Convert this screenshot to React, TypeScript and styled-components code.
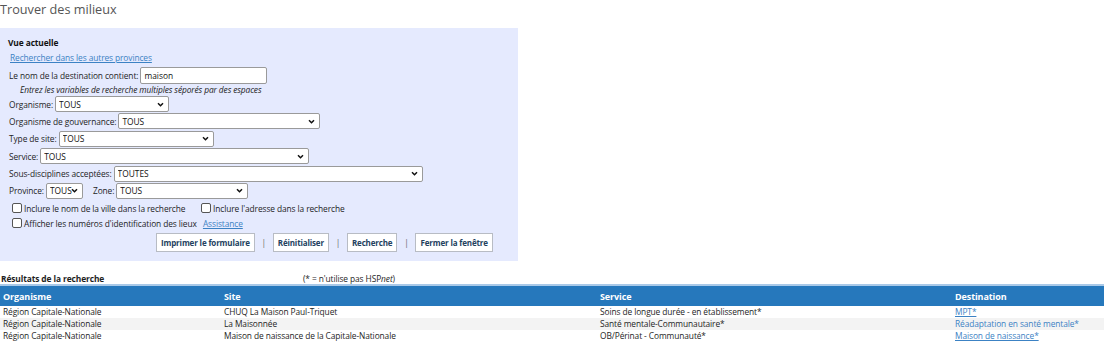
import React from 'react';
import styled, { createGlobalStyle } from 'styled-components';

const GlobalStyle = createGlobalStyle`
  body {
    margin: 0;
    background: #fff;
    font-family: 'Open Sans', 'Liberation Sans', sans-serif;
    font-size: 8.4px;
    letter-spacing: -0.1px;
    color: #1e1e1e;
  }
`;

const Page = styled.div`
  width: 1104px;
  height: 350px;
  overflow: hidden;
`;

const Title = styled.h1`
  margin: 0;
  padding: 1px 0 0 0;
  height: 27px;
  font-family: 'Open Sans', sans-serif;
  font-weight: 400;
  font-size: 12.7px;
  letter-spacing: 0;
  line-height: 17px;
  color: #555;
`;

const Panel = styled.div`
  width: 518px;
  box-sizing: border-box;
  background: #e5eafe;
  padding: 9px 8px 8px 8px;
  height: 233px;
`;

const PanelHeading = styled.div`
  font-weight: 700;
  line-height: 12px;
  color: #111;
`;

const Link = styled.a`
  color: #3c82c4;
  text-decoration: underline;
  cursor: pointer;
`;

const TopLink = styled(Link)`
  display: block;
  margin: 3px 0 0 2px;
  line-height: 12px;
`;

const Row = styled.div<{ $mt?: number }>`
  display: flex;
  align-items: center;
  gap: 2px;
  margin-top: ${(p) => p.$mt ?? 1.4}px;
  margin-left: 1px;
  height: 16px;
`;

const Label = styled.span<{ $ml?: number }>`
  white-space: nowrap;
  margin-left: ${(p) => p.$ml ?? 0}px;
`;

const TextInput = styled.input`
  width: 127px;
  height: 17px;
  box-sizing: border-box;
  border: 1px solid #9a9a9a;
  border-radius: 2px;
  padding: 0 3px;
  font: inherit;
  color: #111;
  background: #fff;
`;

const Hint = styled.div`
  font-style: italic;
  margin: 1px 0 0 12px;
  line-height: 11px;
  color: #222;
`;

const chevron =
  "url(\"data:image/svg+xml;utf8,<svg xmlns='http://www.w3.org/2000/svg' width='8' height='6' viewBox='0 0 8 6'><path d='M1 1.5 L4 4.5 L7 1.5' fill='none' stroke='%23111' stroke-width='1.8'/></svg>\")";

const Select = styled.select<{ $w: number }>`
  appearance: none;
  width: ${(p) => p.$w}px;
  height: 16px;
  box-sizing: border-box;
  border: 1px solid #9a9a9a;
  border-radius: 2px;
  padding: 0 0 0 3px;
  font: inherit;
  color: #111;
  background: #fff ${chevron} no-repeat right 4px center;
  background-size: 7px 5px;
`;

const CheckRow = styled.div<{ $mt?: number }>`
  display: flex;
  align-items: center;
  margin-top: ${(p) => p.$mt ?? 4}px;
  margin-left: 4px;
  height: 11px;
`;

const CheckLabel = styled.label<{ $w?: number }>`
  display: flex;
  align-items: center;
  gap: 2px;
  width: ${(p) => (p.$w ? `${p.$w}px` : 'auto')};
  white-space: nowrap;
`;

const Check = styled.input.attrs({ type: 'checkbox' })`
  appearance: none;
  margin: 0;
  width: 10px;
  height: 10px;
  border: 1px solid #555;
  border-radius: 2px;
  background: #fff;
`;

const ButtonBar = styled.div`
  display: flex;
  align-items: center;
  margin: 4px 0 0 148px;
`;

const Button = styled.button`
  height: 19px;
  padding: 0 4px;
  border: 1px solid #b8bcc4;
  background: #fff;
  font-family: 'Open Sans', sans-serif;
  font-weight: 700;
  font-size: 8px;
  letter-spacing: -0.15px;
  white-space: nowrap;
  color: #24415e;
  cursor: pointer;
`;

const Sep = styled.span`
  width: 18px;
  text-align: center;
  color: #666;
`;

const ResultsHead = styled.div`
  display: flex;
  align-items: flex-end;
  margin-top: 11px;
  height: 12px;
  padding-left: 1px;
`;

const ResultsTitle = styled.span`
  font-weight: 700;
  width: 302px;
`;

const Note = styled.span`
  font-size: 8.4px;
`;

const Table = styled.table`
  width: 1104px;
  table-layout: fixed;
  border-collapse: collapse;
`;

const Th = styled.th<{ $w: number }>`
  width: ${(p) => p.$w}px;
  box-sizing: border-box;
  text-align: left;
  background: #2678bc;
  color: #fff;
  font-weight: 700;
  font-size: 9px;
  height: 21px;
  padding: 0 3px;
  border-top: 2px solid #a9c9e8;
`;

const Td = styled.td`
  padding: 0 3px;
  height: 12px;
  line-height: 12px;
  white-space: nowrap;
`;

const Tr = styled.tr`
  &:nth-child(even) {
    background: #f3f3f3;
  }
`;

const DestLink = styled(Link)<{ $u: boolean }>`
  text-decoration: ${(p) => (p.$u ? 'underline' : 'none')};
`;

const results = [
  {
    org: 'Région Capitale-Nationale',
    site: 'CHUQ La Maison Paul-Triquet',
    service: 'Soins de longue durée - en établissement*',
    dest: 'MPT*',
    underline: true,
  },
  {
    org: 'Région Capitale-Nationale',
    site: 'La Maisonnée',
    service: 'Santé mentale-Communautaire*',
    dest: 'Réadaptation en santé mentale*',
    underline: false,
  },
  {
    org: 'Région Capitale-Nationale',
    site: 'Maison de naissance de la Capitale-Nationale',
    service: 'OB/Périnat - Communauté*',
    dest: 'Maison de naissance*',
    underline: true,
  },
];

export default function App() {
  return (
    <Page>
      <GlobalStyle />
      <Title>Trouver des milieux</Title>
      <Panel>
        <PanelHeading>Vue actuelle</PanelHeading>
        <TopLink>Rechercher dans les autres provinces</TopLink>
        <Row $mt={3}>
          <Label>Le nom de la destination contient:</Label>
          <TextInput defaultValue="maison" />
        </Row>
        <Hint>Entrez les variables de recherche multiples séporés par des espaces</Hint>
        <Row $mt={1}>
          <Label>Organisme:</Label>
          <Select $w={114}><option>TOUS</option></Select>
        </Row>
        <Row>
          <Label>Organisme de gouvernance:</Label>
          <Select $w={202}><option>TOUS</option></Select>
        </Row>
        <Row>
          <Label>Type de site:</Label>
          <Select $w={155}><option>TOUS</option></Select>
        </Row>
        <Row>
          <Label>Service:</Label>
          <Select $w={269}><option>TOUS</option></Select>
        </Row>
        <Row>
          <Label>Sous-disciplines acceptées:</Label>
          <Select $w={309}><option>TOUTES</option></Select>
        </Row>
        <Row>
          <Label>Province:</Label>
          <Select $w={37}><option>TOUS</option></Select>
          <Label $ml={8}>Zone:</Label>
          <Select $w={132}><option>TOUS</option></Select>
        </Row>
        <CheckRow $mt={4}>
          <CheckLabel $w={189}><Check />Inclure le nom de la ville dans la recherche</CheckLabel>
          <CheckLabel><Check />Inclure l'adresse dans la recherche</CheckLabel>
        </CheckRow>
        <CheckRow>
          <CheckLabel>
            <Check />Afficher les numéros d'identification des lieux&nbsp;&nbsp;<Link>Assistance</Link>
          </CheckLabel>
        </CheckRow>
        <ButtonBar>
          <Button>Imprimer le formulaire</Button>
          <Sep>|</Sep>
          <Button>Réinitialiser</Button>
          <Sep>|</Sep>
          <Button>Recherche</Button>
          <Sep>|</Sep>
          <Button>Fermer la fenêtre</Button>
        </ButtonBar>
      </Panel>
      <ResultsHead>
        <ResultsTitle>Résultats de la recherche</ResultsTitle>
        <Note>(* = n'utilise pas HSP<i>net</i>)</Note>
      </ResultsHead>
      <Table>
        <thead>
          <tr>
            <Th $w={221}>Organisme</Th>
            <Th $w={376}>Site</Th>
            <Th $w={355}>Service</Th>
            <Th $w={152}>Destination</Th>
          </tr>
        </thead>
        <tbody>
          {results.map((r, i) => (
            <Tr key={i}>
              <Td>{r.org}</Td>
              <Td>{r.site}</Td>
              <Td>{r.service}</Td>
              <Td>
                <DestLink $u={r.underline}>{r.dest}</DestLink>
              </Td>
            </Tr>
          ))}
        </tbody>
      </Table>
    </Page>
  );
}
